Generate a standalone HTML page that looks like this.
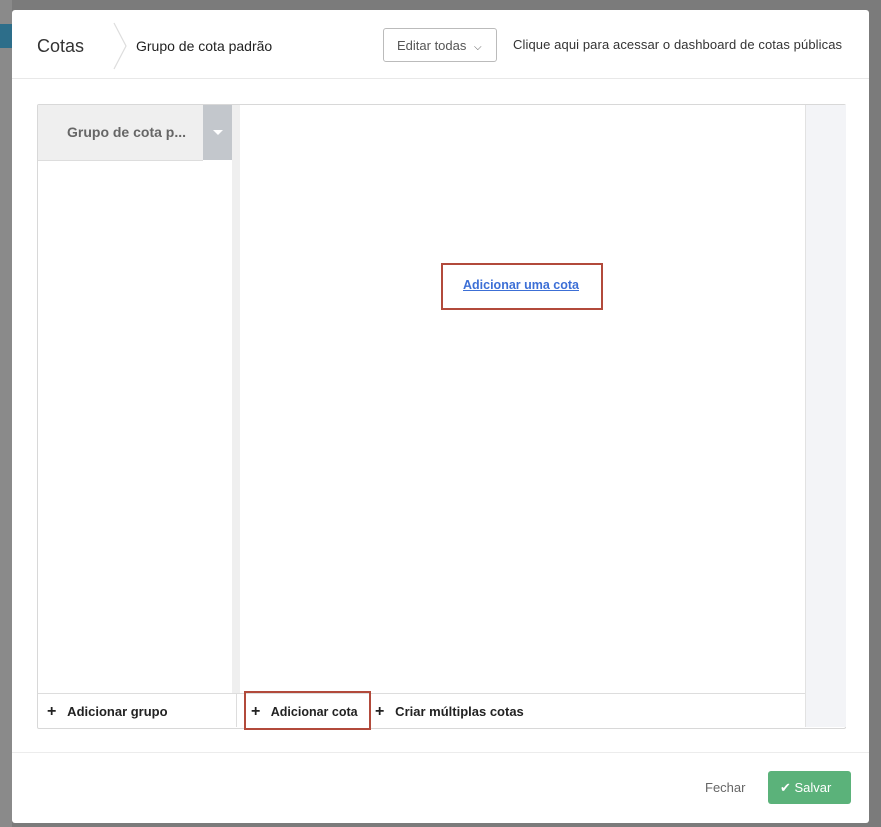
<!DOCTYPE html>
<html><head><style>
body{margin:0;width:881px;height:827px;background:#7b7b7b;font-family:"Liberation Sans",sans-serif;position:relative;overflow:hidden}
.a{position:absolute}
.m{left:12px;top:10px;width:857px;height:813px;background:#fff;border-radius:3px}
</style></head><body>
<div class="a" style="left:0;top:0;width:12px;height:827px;background:#8a8a8a"></div>
<div class="a" style="left:0;top:24px;width:12px;height:24px;background:#2d6e8a"></div>
<div class="a m"></div>
<div class="a" style="left:37px;top:36px;font-size:18px;color:#333;font-weight:500">Cotas</div>
<svg class="a" style="left:112px;top:22px" width="16" height="48"><path d="M2 1 L14 24 L2 47" fill="none" stroke="#ddd" stroke-width="1.2"/></svg>
<div class="a" style="left:136px;top:38px;font-size:14px;color:#222;font-weight:500">Grupo de cota padrão</div>
<div class="a" style="left:383px;top:28px;width:114px;height:34px;border:1px solid #bbb;border-radius:3px;box-sizing:border-box;font-size:13px;color:#555;padding:9px 0 0 13px">Editar todas <span style="font-size:10px;margin-left:4px">⌵</span></div>
<div class="a" style="left:513px;top:37px;font-size:13px;color:#333;letter-spacing:0.1px">Clique aqui para acessar o dashboard de cotas públicas</div>
<div class="a" style="left:12px;top:78px;width:857px;height:1px;background:#e8e8e8"></div>
<div class="a" style="left:37px;top:104px;width:807px;height:623px;border:1px solid #d8d8d8;border-radius:2px"></div>
<div class="a" style="left:38px;top:105px;width:165px;height:55px;background:#efefef;border-bottom:1px solid #ddd"></div>
<div class="a" style="left:67px;top:124px;font-size:14px;font-weight:bold;color:#666">Grupo de cota p...</div>
<div class="a" style="left:203px;top:105px;width:29px;height:55px;background:#c3c7cc"></div>
<div class="a" style="left:213px;top:130px;width:0;height:0;border-left:5px solid transparent;border-right:5px solid transparent;border-top:5px solid #fff"></div>
<div class="a" style="left:232px;top:105px;width:8px;height:588px;background:#efefef"></div>
<div class="a" style="left:805px;top:105px;width:40px;height:622px;background:#f3f4f7;border-left:1px solid #e2e2e2"></div>
<div class="a" style="left:38px;top:693px;width:767px;height:1px;background:#ddd"></div>
<div class="a" style="left:236px;top:693px;width:1px;height:34px;background:#ddd"></div>
<div class="a" style="left:47px;top:703px;font-size:13px;font-weight:bold;color:#222"><span style="font-size:16px">+</span>&nbsp;&nbsp;&nbsp;Adicionar grupo</div>
<div class="a" style="left:251px;top:703px;font-size:12.5px;font-weight:bold;color:#222"><span style="font-size:16px">+</span>&nbsp;&nbsp;&nbsp;Adicionar cota</div>
<div class="a" style="left:375px;top:703px;font-size:13px;font-weight:bold;color:#222"><span style="font-size:16px">+</span>&nbsp;&nbsp;&nbsp;Criar múltiplas cotas</div>
<div class="a" style="left:244px;top:691px;width:127px;height:39px;border:2px solid #b24a3b;box-sizing:border-box"></div>
<div class="a" style="left:441px;top:263px;width:162px;height:47px;border:2px solid #b24a3b;box-sizing:border-box"></div>
<div class="a" style="left:463px;top:278px;font-size:12.5px;font-weight:bold;color:#3c6fd6;text-decoration:underline">Adicionar uma cota</div>
<div class="a" style="left:12px;top:752px;width:857px;height:1px;background:#ececec"></div>
<div class="a" style="left:705px;top:780px;font-size:13px;color:#666">Fechar</div>
<div class="a" style="left:768px;top:771px;width:83px;height:33px;background:#5bb27a;border-radius:3px;color:#fff;font-size:13px;box-sizing:border-box;padding:9px 0 0 12px">✔ Salvar</div>
</body></html>
